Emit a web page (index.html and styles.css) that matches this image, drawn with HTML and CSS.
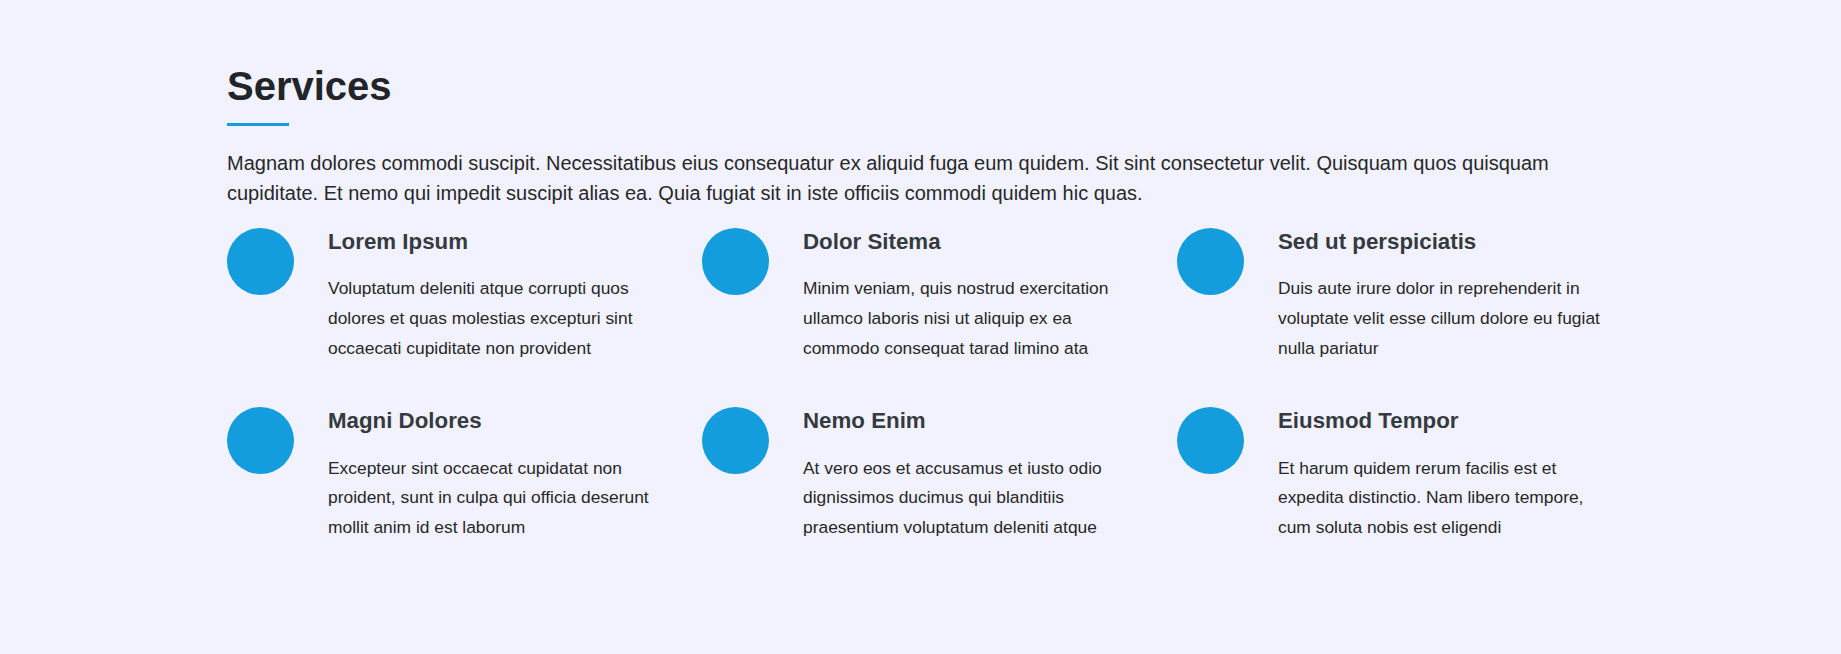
FILE: index.html
```html
<!DOCTYPE html>
<html lang="en">
<head>
<meta charset="utf-8">
<title>Services</title>
<link rel="stylesheet" href="styles.css">
</head>
<body>
<section class="services">
  <div class="container">
    <div class="section-title">
      <h2>Services</h2>
      <p>Magnam dolores commodi suscipit. Necessitatibus eius consequatur ex aliquid fuga eum quidem. Sit sint consectetur velit. Quisquam quos quisquam cupiditate. Et nemo qui impedit suscipit alias ea. Quia fugiat sit in iste officiis commodi quidem hic quas.</p>
    </div>
    <div class="grid">
      <div class="icon-box">
        <div class="icon"></div>
        <div class="body">
          <h4 class="title">Lorem Ipsum</h4>
          <p class="description">Voluptatum deleniti atque corrupti quos dolores et quas molestias excepturi sint occaecati cupiditate non provident</p>
        </div>
      </div>
      <div class="icon-box">
        <div class="icon"></div>
        <div class="body">
          <h4 class="title">Dolor Sitema</h4>
          <p class="description">Minim veniam, quis nostrud exercitation ullamco laboris nisi ut aliquip ex ea commodo consequat tarad limino ata</p>
        </div>
      </div>
      <div class="icon-box">
        <div class="icon"></div>
        <div class="body">
          <h4 class="title">Sed ut perspiciatis</h4>
          <p class="description">Duis aute irure dolor in reprehenderit in voluptate velit esse cillum dolore eu fugiat nulla pariatur</p>
        </div>
      </div>
      <div class="icon-box">
        <div class="icon"></div>
        <div class="body">
          <h4 class="title">Magni Dolores</h4>
          <p class="description">Excepteur sint occaecat cupidatat non proident, sunt in culpa qui officia deserunt mollit anim id est laborum</p>
        </div>
      </div>
      <div class="icon-box">
        <div class="icon"></div>
        <div class="body">
          <h4 class="title">Nemo Enim</h4>
          <p class="description">At vero eos et accusamus et iusto odio dignissimos ducimus qui blanditiis praesentium voluptatum deleniti atque</p>
        </div>
      </div>
      <div class="icon-box">
        <div class="icon"></div>
        <div class="body">
          <h4 class="title">Eiusmod Tempor</h4>
          <p class="description">Et harum quidem rerum facilis est et expedita distinctio. Nam libero tempore, cum soluta nobis est eligendi</p>
        </div>
      </div>
    </div>
  </div>
</section>
</body>
</html>
```

FILE: styles.css
```css
* { box-sizing: border-box; }

html, body {
  margin: 0;
  padding: 0;
}

body {
  background: #f1f2fd;
  font-family: "Liberation Sans", Arial, sans-serif;
  color: #272829;
  min-height: 654px;
}

.services {
  padding: 62px 0 60px;
}

.container {
  width: 1387px;
  margin: 0 auto;
}

.section-title h2 {
  margin: 0;
  font-size: 40px;
  line-height: 48px;
  font-weight: 700;
  color: #212529;
}

.section-title h2::after {
  content: "";
  display: block;
  width: 62px;
  height: 3px;
  margin-top: 13px;
  background: #149ddd;
}

.section-title p {
  margin: 23px 0 0;
  font-size: 20px;
  line-height: 29.5px;
  color: #272829;
}

.grid {
  display: grid;
  grid-template-columns: repeat(3, 1fr);
  margin-right: -38px;
  margin-top: 20px;
  row-gap: 44px;
}

.icon-box {
  display: flex;
  align-items: flex-start;
  padding-right: 42px;
}

.icon {
  flex: 0 0 67px;
  width: 67px;
  height: 67px;
  border-radius: 50%;
  background: #149ddd;
  margin-right: 34px;
}

.body {
  flex: 1;
  min-width: 0;
}

.title {
  margin: 1px 0 19px;
  font-size: 22.3px;
  line-height: 26.4px;
  font-weight: 700;
  color: #343a40;
}

.description {
  margin: 0;
  font-size: 17.4px;
  line-height: 29.6px;
  color: #272829;
}
```
